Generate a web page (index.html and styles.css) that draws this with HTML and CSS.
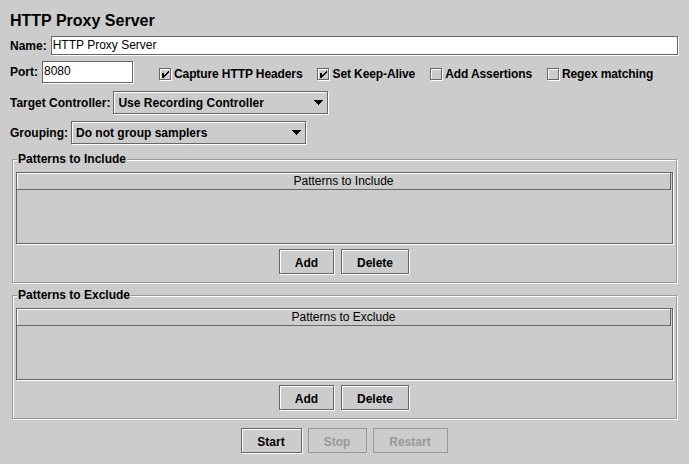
FILE: index.html
```html
<!DOCTYPE html>
<html>
<head>
<meta charset="utf-8">
<title>HTTP Proxy Server</title>
<link rel="stylesheet" href="styles.css">
</head>
<body>
<div class="page">
  <div class="title">HTTP Proxy Server</div>

  <div class="row row-name">
    <span class="lbl">Name:</span>
    <div class="field field-name">HTTP Proxy Server</div>
  </div>

  <div class="row row-port">
    <span class="lbl">Port:</span>
    <div class="field field-port">8080</div>
    <div class="checks">
      <div class="check">
        <svg class="cb" width="13" height="13" viewBox="0 0 13 13" shape-rendering="crispEdges"><path d="M1.5 1.5H12.5V12.5H1.5Z" fill="none" stroke="#fff"/><path d="M0.5 0.5H11.5V11.5H0.5Z" fill="none" stroke="#666"/><path d="M3 5h2v5h-2z M9 3h1v2h-1z M8 4h1v2h-1z M7 5h1v2h-1z M6 6h1v2h-1z M5 7h1v2h-1z" fill="#000"/></svg>
        <span>Capture HTTP Headers</span>
      </div>
      <div class="check">
        <svg class="cb" width="13" height="13" viewBox="0 0 13 13" shape-rendering="crispEdges"><path d="M1.5 1.5H12.5V12.5H1.5Z" fill="none" stroke="#fff"/><path d="M0.5 0.5H11.5V11.5H0.5Z" fill="none" stroke="#666"/><path d="M3 5h2v5h-2z M9 3h1v2h-1z M8 4h1v2h-1z M7 5h1v2h-1z M6 6h1v2h-1z M5 7h1v2h-1z" fill="#000"/></svg>
        <span>Set Keep-Alive</span>
      </div>
      <div class="check">
        <svg class="cb" width="13" height="13" viewBox="0 0 13 13" shape-rendering="crispEdges"><path d="M1.5 1.5H12.5V12.5H1.5Z" fill="none" stroke="#fff"/><path d="M0.5 0.5H11.5V11.5H0.5Z" fill="none" stroke="#666"/></svg>
        <span>Add Assertions</span>
      </div>
      <div class="check">
        <svg class="cb" width="13" height="13" viewBox="0 0 13 13" shape-rendering="crispEdges"><path d="M1.5 1.5H12.5V12.5H1.5Z" fill="none" stroke="#fff"/><path d="M0.5 0.5H11.5V11.5H0.5Z" fill="none" stroke="#666"/></svg>
        <span>Regex matching</span>
      </div>
    </div>
  </div>

  <div class="row row-target">
    <span class="lbl">Target Controller:</span>
    <div class="combo combo-target">
      <span>Use Recording Controller</span>
      <svg class="arrow" width="9" height="5" viewBox="0 0 9 5" shape-rendering="crispEdges"><path d="M0 0h9v1h-1v1h-1v1h-1v1h-1v1h-1v-1h-1v-1h-1v-1h-1v-1h-1z" fill="#000"/></svg>
    </div>
  </div>

  <div class="row row-group">
    <span class="lbl">Grouping:</span>
    <div class="combo combo-group">
      <span>Do not group samplers</span>
      <svg class="arrow" width="9" height="5" viewBox="0 0 9 5" shape-rendering="crispEdges"><path d="M0 0h9v1h-1v1h-1v1h-1v1h-1v1h-1v-1h-1v-1h-1v-1h-1v-1h-1z" fill="#000"/></svg>
    </div>
  </div>

  <div class="panel panel-include">
    <span class="panel-title">Patterns to Include</span>
    <div class="scroll">
      <div class="thead">Patterns to Include</div>
    </div>
    <div class="btns">
      <div class="btn btn-add">Add</div>
      <div class="btn btn-delete">Delete</div>
    </div>
  </div>

  <div class="panel panel-exclude">
    <span class="panel-title">Patterns to Exclude</span>
    <div class="scroll">
      <div class="thead">Patterns to Exclude</div>
    </div>
    <div class="btns">
      <div class="btn btn-add">Add</div>
      <div class="btn btn-delete">Delete</div>
    </div>
  </div>

  <div class="btns main-btns">
    <div class="btn btn-start">Start</div>
    <div class="btn btn-stop disabled">Stop</div>
    <div class="btn btn-restart disabled">Restart</div>
  </div>
</div>
</body>
</html>
```

FILE: styles.css
```css
* { box-sizing: border-box; }
html, body { margin: 0; padding: 0; }
body {
  background: #cccccc;
  width: 689px;
  height: 464px;
  overflow: hidden;
  font-family: "Liberation Sans", Arial, sans-serif;
  font-size: 12px;
  color: #000;
}
.page { padding: 11px 10px 0 10px; }

.title {
  font-size: 16px;
  font-weight: bold;
  line-height: 20px;
  height: 20px;
}

.row { display: flex; align-items: center; }
.lbl { font-weight: bold; line-height: 14px; white-space: nowrap; }

.row-name { margin-top: 5px; gap: 4px; }
.row-port { margin-top: 6px; gap: 4px; }
.row-target { margin-top: 8px; gap: 3px; }
.row-group { margin-top: 7px; gap: 3px; }

.field {
  background: #fff;
  border: 1px solid #666;
  box-shadow: 1px 1px 0 #fff;
  padding-left: 1px;
  white-space: nowrap;
}
.field-name { flex: 1; height: 19px; line-height: 17px; margin-right: 1px; }
.field-port { width: 91px; height: 22px; line-height: 18px; }

.checks { display: flex; gap: 15px; margin-left: 22px; margin-top: 4px; }
.check {
  display: flex;
  align-items: center;
  gap: 2px;
  font-weight: bold;
  line-height: 14px;
  letter-spacing: -0.1px;
  white-space: nowrap;
}
.cb { display: block; flex: none; }

.combo {
  display: flex;
  align-items: center;
  justify-content: space-between;
  height: 23px;
  border: 1px solid #666;
  box-shadow: inset 1px 1px 0 #fff, 1px 1px 0 #fff;
  padding: 0 4px 0 4px;
  font-weight: bold;
  line-height: 14px;
  white-space: nowrap;
}
.combo-target { width: 215px; }
.combo-group { width: 235px; }
.arrow { display: block; flex: none; }

.panel {
  position: relative;
  border: 1px solid #999;
  box-shadow: inset 1px 1px 0 #fff, 1px 1px 0 #fff;
  margin: 15px 2px 0 2px;
  padding: 12px 3px 8px 3px;
}
.panel-exclude { margin-top: 12px; }
.panel-title {
  position: absolute;
  top: -8px;
  left: 4px;
  padding: 0 1px;
  background: #cccccc;
  font-weight: bold;
  line-height: 14px;
  white-space: nowrap;
}

.scroll {
  height: 72px;
  border: 1px solid #666;
  box-shadow: 1px 1px 0 #fff;
}
.thead {
  height: 17px;
  margin-right: 1px;
  border-right: 1px solid #666;
  border-bottom: 1px solid #666;
  box-shadow: inset 1px 1px 0 #fff;
  text-align: center;
  line-height: 16px;
  white-space: nowrap;
}

.btns { display: flex; justify-content: center; gap: 6px; margin-top: 5px; }
.btn {
  height: 25px;
  border: 1px solid #666;
  box-shadow: inset 1px 1px 0 #fff, 1px 1px 0 #fff;
  margin-right: 1px;
  padding-top: 2px;
  display: flex;
  align-items: center;
  justify-content: center;
  font-weight: bold;
  line-height: 14px;
  white-space: nowrap;
}
.btn-add { width: 55px; }
.btn-delete { width: 68px; }

.main-btns { margin-top: 9px; gap: 5px; }
.btn-start { width: 61px; }
.btn-stop { width: 59px; }
.btn-restart { width: 75px; }
.btn.disabled {
  border-color: #999;
  box-shadow: none;
  color: #999;
}
```
